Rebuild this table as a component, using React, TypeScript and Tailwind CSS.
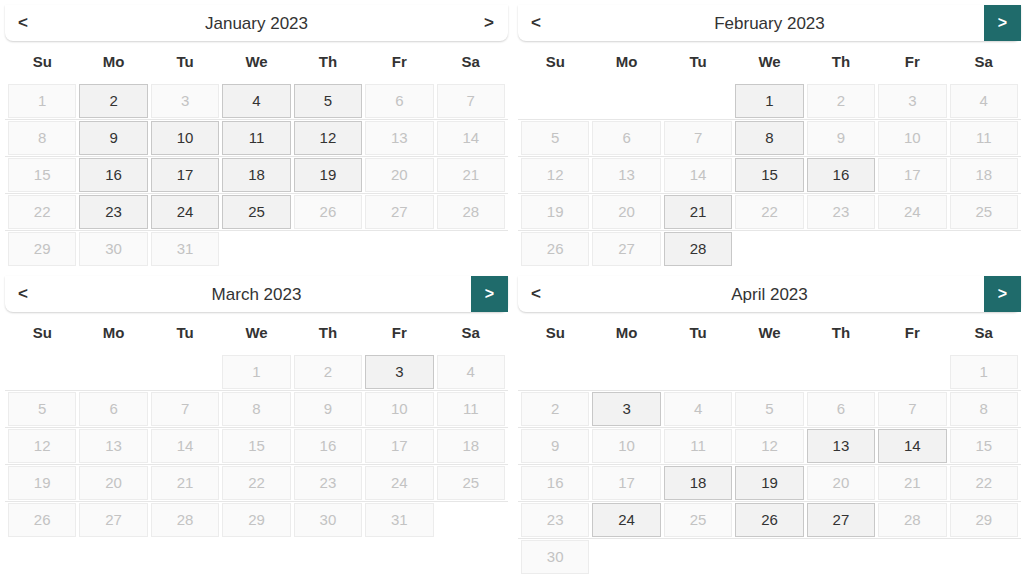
import React from "react";

type Cal = {
  title: string;
  offset: number;
  days: number;
  active: number[];
  teal: boolean;
};

const cals: Cal[] = [
  { title: "January 2023", offset: 0, days: 31, active: [2, 4, 5, 9, 10, 11, 12, 16, 17, 18, 19, 23, 24, 25], teal: false },
  { title: "February 2023", offset: 3, days: 28, active: [1, 8, 15, 16, 21, 28], teal: true },
  { title: "March 2023", offset: 3, days: 31, active: [3], teal: true },
  { title: "April 2023", offset: 6, days: 30, active: [3, 13, 14, 18, 19, 24, 26, 27], teal: true },
];

const dayNames = ["Su", "Mo", "Tu", "We", "Th", "Fr", "Sa"];

function Calendar({ cal }: { cal: Cal }) {
  const cells: (number | null)[] = [];
  for (let i = 0; i < cal.offset; i++) cells.push(null);
  for (let d = 1; d <= cal.days; d++) cells.push(d);
  while (cells.length % 7 !== 0) cells.push(null);
  const weeks: (number | null)[][] = [];
  for (let i = 0; i < cells.length; i += 7) weeks.push(cells.slice(i, i + 7));

  return (
    <div className="flex flex-col">
      <div className="grid grid-cols-[1fr_auto_1fr] items-center h-[36px] rounded-b-lg bg-white shadow-[0_1px_2px_rgba(0,0,0,0.18)]">
        <div className="flex justify-start pl-[13px] text-[17px] font-bold text-[#333]">&lt;</div>
        <div className="text-[17px] text-[#333] leading-none">{cal.title}</div>
        <div className="flex justify-end">
          {cal.teal ? (
            <div className="w-[37px] h-[36px] -mt-[1px] bg-[#1f6b6b] flex items-center justify-center text-white text-[16px] font-bold">&gt;</div>
          ) : (
            <div className="pr-[14px] text-[17px] font-bold text-[#333]">&gt;</div>
          )}
        </div>
      </div>
      <div className="grid grid-cols-7 h-[42px] items-center px-[3px] gap-x-[3px]">
        {dayNames.map((d) => (
          <div key={d} className="text-center text-[15px] font-semibold text-[#333]">{d}</div>
        ))}
      </div>
      <div className="flex flex-col divide-y divide-[#e6e6e6]">
        {weeks.map((w, wi) => (
          <div key={wi} className="grid grid-cols-7 gap-x-[3px] px-[3px] py-px">
            {w.map((d, di) =>
              d === null ? (
                <div key={di} className="h-[34px]" />
              ) : cal.active.includes(d) ? (
                <div key={di} className="h-[34px] flex items-center justify-center border border-[#c8c8c8] bg-[#f2f2f2] text-[15px] text-[#333]">{d}</div>
              ) : (
                <div key={di} className="h-[34px] flex items-center justify-center border border-[#ececec] bg-[#fafafa] text-[15px] text-[#c3c3c3]">{d}</div>
              )
            )}
          </div>
        ))}
      </div>
    </div>
  );
}

export default function App() {
  return (
    <div className="w-[1024px] h-[577px] bg-white overflow-hidden pl-[5px] pr-[3px] pt-[5px]" style={{ fontFamily: '"Liberation Sans", Arial, sans-serif' }}>
      <div className="grid grid-cols-2 gap-x-[10px] gap-y-[9px] items-start">
        {cals.map((c) => (
          <Calendar key={c.title} cal={c} />
        ))}
      </div>
    </div>
  );
}
